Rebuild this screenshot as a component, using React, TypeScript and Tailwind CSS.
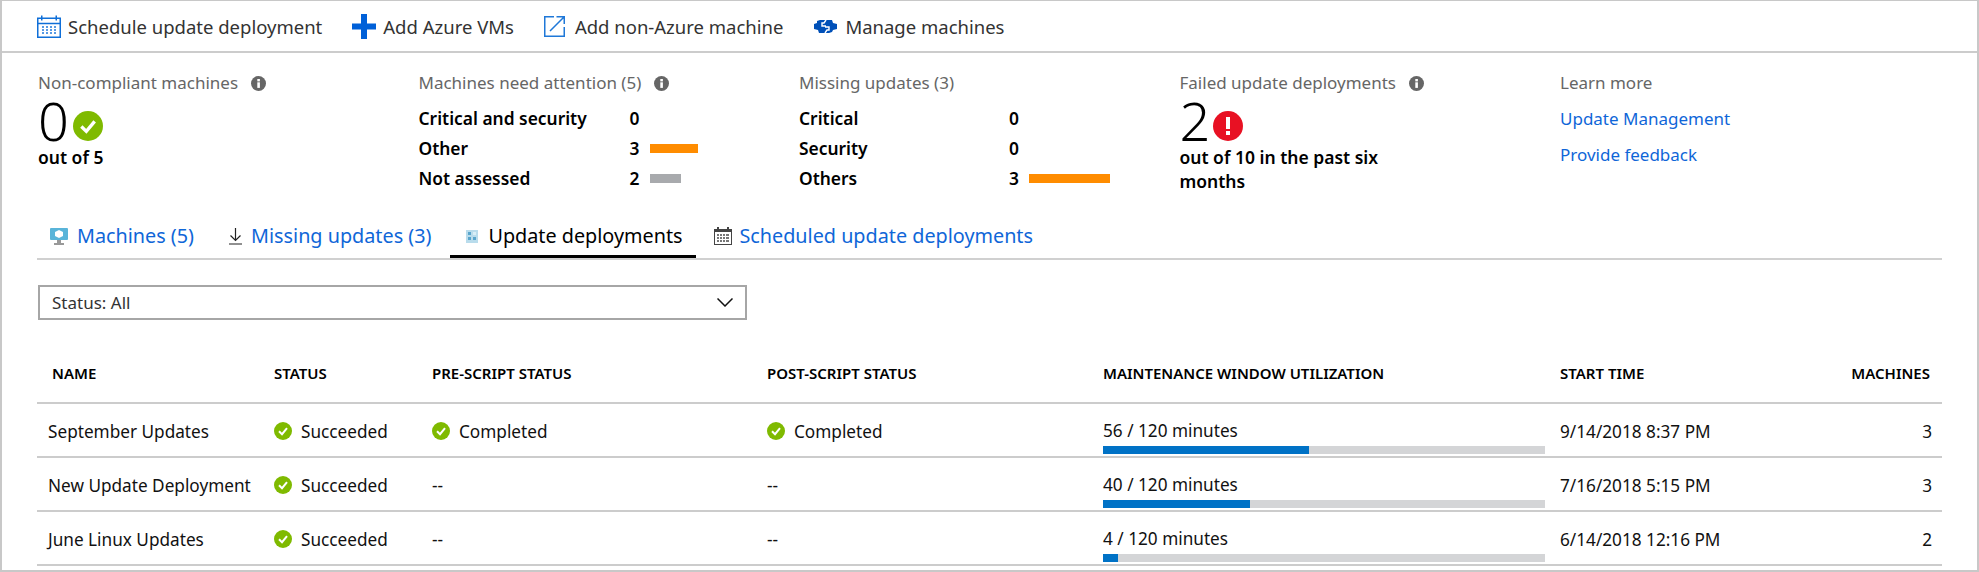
import type { ReactNode } from "react";

const font = "font-['Noto_Sans','Open_Sans',sans-serif]";

function CalendarIcon() {
  const c = "#0f6fd8";
  return (
    <svg width="24" height="23" viewBox="0 0 24 23" fill="none">
      <rect x="0.75" y="3.25" width="22.5" height="19" fill="#fff" stroke={c} strokeWidth="1.5" />
      <path d="M0 8.5h24" stroke={c} strokeWidth="1.5" />
      <rect x="4" y="0.5" width="1.5" height="5" fill={c} />
      <rect x="18.5" y="0.5" width="1.5" height="5" fill={c} />
      {[5, 9, 13, 17].map((x) =>
        [11, 14, 17].map((y) => (
          <rect key={`${x}-${y}`} x={x} y={y} width="2" height="2" fill={c} opacity="0.7" />
        )),
      )}
    </svg>
  );
}

function CheckCircle({ size }: { size: number }) {
  return (
    <svg width={size} height={size} viewBox="0 0 18 18">
      <circle cx="9" cy="9" r="9" fill="#7fba00" />
      <path d="M5 9.3 8 12.2 13 6.2" fill="none" stroke="#fff" strokeWidth="2" />
    </svg>
  );
}

function InfoDot() {
  return (
    <svg width="15" height="15" viewBox="0 0 15 15">
      <circle cx="7.5" cy="7.5" r="7.5" fill="#666" />
      <rect x="6.3" y="6.3" width="2.6" height="5.6" fill="#fff" />
      <rect x="6.3" y="3" width="2.6" height="2.4" fill="#fff" />
    </svg>
  );
}

function Summary({ title, info, children }: { title: string; info?: boolean; children: ReactNode }) {
  return (
    <div className="w-[380.5px] shrink-0">
      <div className="flex h-[24px] items-center gap-[13px] text-[17px] leading-[24px] text-[#666]">
        {title}
        {info ? <InfoDot /> : null}
      </div>
      {children}
    </div>
  );
}

function CountRows({ rows, valueWidth }: { rows: { label: string; value: number; bar?: number; color?: string }[]; valueWidth: number }) {
  return (
    <div className="mt-[8px] text-[17.4px] leading-[24px] font-semibold text-black">
      {rows.map((row) => (
        <div key={row.label} className="flex h-[30px] items-center">
          <span style={{ width: valueWidth }}>{row.label}</span>
          <span className="w-[16px]">{row.value}</span>
          {row.bar ? <span className="ml-[4px] h-[9px]" style={{ width: row.bar, backgroundColor: row.color }} /> : null}
        </div>
      ))}
    </div>
  );
}

const deployments = [
  { name: "September Updates", pre: "Completed", post: "Completed", used: 56, fill: 206, start: "9/14/2018 8:37 PM", machines: 3 },
  { name: "New Update Deployment", pre: "--", post: "--", used: 40, fill: 147, start: "7/16/2018 5:15 PM", machines: 3 },
  { name: "June Linux Updates", pre: "--", post: "--", used: 4, fill: 15, start: "6/14/2018 12:16 PM", machines: 2 },
];

const gridCols = "grid grid-cols-[237px_158px_335px_336px_457px_1fr]";

function ScriptStatus({ value }: { value: string }) {
  if (value === "--") return <span>--</span>;
  return (
    <span className="flex items-center gap-[9px]">
      <CheckCircle size={18} />
      {value}
    </span>
  );
}

export default function App() {
  return (
    <div className={`${font} h-[572px] overflow-hidden border-t border-r-2 border-b-2 border-l-2 border-[#c8c8c8] bg-white text-black`}>
      <div className="flex h-[52px] items-center border-b-2 border-[#ccc] pt-[1px] pl-[35px] text-[18.5px] text-[#333]">
        <span className="flex items-center gap-[7px]">
          <CalendarIcon />
          Schedule update deployment
        </span>
        <span className="ml-[30px] flex items-center gap-[7px]">
          <svg width="24" height="25" viewBox="0 0 24 25">
            <path d="M9 0h6v9.5h9v6h-9V25H9v-9.500H0v-6h9z" fill="#0060d8" />
          </svg>
          Add Azure VMs
        </span>
        <span className="ml-[30px] flex items-center gap-[10px]">
          <svg width="21" height="21" viewBox="0 0 21 21" fill="none" stroke="#1f78d8" strokeWidth="1.5">
            <path d="M10 .75H.75v19.5h19.5V11" />
            <path d="M6 15 19.500 1.500M12.500 .75h7.750V8" />
          </svg>
          Add non-Azure machine
        </span>
        <span className="ml-[31px] flex items-center gap-[8px]">
          <svg width="23" height="13" viewBox="0 0 23 13">
            <path d="M0 4 3 3V1l3-1h12l1 3 4 1v5l-4 1-1 2-3 1H5L4 10 0 9z" fill="#0050b8" />
            <path d="M12 0 10 3H8v3h4M11 13l2-3h2V7h-4" fill="none" stroke="#fff" strokeWidth="1.4" />
          </svg>
          Manage machines
        </span>
      </div>

      <div className="flex pt-[18px] pl-[36px]">
        <Summary title="Non-compliant machines" info>
          <div className="flex h-[50px] items-center">
            <span className="text-[54px] leading-[44px] font-light">0</span>
            <span className="mt-[11px] ml-[4px]">
              <CheckCircle size={30} />
            </span>
          </div>
          <div className="text-[17.5px] leading-[24px] font-semibold">out of 5</div>
        </Summary>
        <Summary title="Machines need attention (5)" info>
          <CountRows
            valueWidth={211}
            rows={[
              { label: "Critical and security", value: 0 },
              { label: "Other", value: 3, bar: 48, color: "#ff8c00" },
              { label: "Not assessed", value: 2, bar: 31, color: "#a8aaad" },
            ]}
          />
        </Summary>
        <Summary title="Missing updates (3)">
          <CountRows
            valueWidth={210}
            rows={[
              { label: "Critical", value: 0 },
              { label: "Security", value: 0 },
              { label: "Others", value: 3, bar: 81, color: "#ff8c00" },
            ]}
          />
        </Summary>
        <Summary title="Failed update deployments" info>
          <div className="flex h-[50px] items-center">
            <span className="text-[54px] leading-[44px] font-light">2</span>
            <span className="mt-[11px] ml-[3px]">
              <svg width="30" height="30" viewBox="0 0 30 30">
                <circle cx="15" cy="15" r="15" fill="#e81123" />
                <rect x="13" y="6" width="4" height="12" fill="#fff" />
                <rect x="13" y="20" width="4" height="4" fill="#fff" />
              </svg>
            </span>
          </div>
          <div className="w-[240px] text-[17.5px] leading-[24px] font-semibold">out of 10 in the past six months</div>
        </Summary>
        <div className="text-[17px] leading-[24px]">
          <div className="flex h-[24px] items-center text-[#666]">Learn more</div>
          <div className="mt-[12px] text-[#0f66d8]">Update Management</div>
          <div className="mt-[12px] text-[#0f66d8]">Provide feedback</div>
        </div>
      </div>

      <div className="mt-[19px] mr-[35px] ml-[35px] flex h-[48px] items-stretch border-b-2 border-[#d0d0d0] pl-[13px] text-[19.8px] text-[#0f66d8]">
        <span className="flex items-center gap-[9px] pt-[2px]">
          <svg width="18" height="17" viewBox="0 0 18 17">
            <rect x="0" y="0" width="18" height="12" rx="1" fill="#59b4d9" />
            <path d="M9 2l4 2v4l-4 2-4-2V4z" fill="#fff" />
            <rect x="7" y="12" width="4" height="3" fill="#999" />
            <rect x="4" y="15" width="10" height="2" fill="#999" />
          </svg>
          Machines (5)
        </span>
        <span className="ml-[35px] flex items-center gap-[9px] pt-[2px]">
          <svg width="13" height="17" viewBox="0 0 13 17" fill="none" stroke="#222" strokeWidth="1.2">
            <path d="M6.500 0v12M1.500 7.500l5 5 5-5M0 16h13" />
          </svg>
          Missing updates (3)
        </span>
        <span className="relative ml-[19px] flex w-[246px] items-center gap-[10px] pt-[2px] pl-[16px] text-black">
          <svg width="12" height="13" viewBox="0 0 12 13">
            <rect width="12" height="13" fill="#b9dcec" />
            <rect x="2" y="2" width="3" height="3" fill="#59a5cc" />
            <rect x="7" y="2" width="3" height="3" fill="#d9eef6" />
            <rect x="2" y="7" width="3" height="3" fill="#59a5cc" />
            <rect x="7" y="7" width="3" height="3" fill="#59a5cc" />
          </svg>
          Update deployments
          <span className="absolute right-0 bottom-0 left-0 h-[3px] bg-black" />
        </span>
        <span className="ml-[18px] flex items-center gap-[7px] pt-[2px]">
          <svg width="18" height="18" viewBox="0 0 18 18">
            <rect x="0.5" y="2.5" width="17" height="15" fill="#fff" stroke="#444" />
            <rect x="0" y="2" width="18" height="3" fill="#444" />
            <rect x="3" y="0" width="2" height="3" fill="#444" />
            <rect x="13" y="0" width="2" height="3" fill="#444" />
            <path d="M3 7h2v2H3zM6 7h2v2H6zM9 7h2v2H9zM12 7h3v2h-3zM3 10h2v2H3zM6 10h2v2H6zM9 10h2v2H9zM12 10h3v2h-3zM3 13h2v2H3zM6 13h2v2H6zM9 13h2v2H9zM12 13h3v2h-3z" fill="#777" />
          </svg>
          Scheduled update deployments
        </span>
      </div>

      <div className="mt-[25px] ml-[36px] flex h-[35px] w-[709px] items-center justify-between border-2 border-[#a6a6a6] pr-[12px] pl-[12px] text-[17px] text-[#333]">
        Status: All
        <svg width="16" height="9" viewBox="0 0 16 9" fill="none" stroke="#111" strokeWidth="1.5">
          <path d="M.5.5 8 8 15.500.5" />
        </svg>
      </div>

      <div className="mr-[35px] ml-[35px]">
        <div className={`${gridCols} mt-[31px] h-[53px] border-b-2 border-[#ccc] pb-[6px] text-[15px] font-semibold`}>
          <span className="self-center pl-[15px]">NAME</span>
          <span className="self-center">STATUS</span>
          <span className="self-center">PRE-SCRIPT STATUS</span>
          <span className="self-center">POST-SCRIPT STATUS</span>
          <span className="self-center">MAINTENANCE WINDOW UTILIZATION</span>
          <span className="flex justify-between self-center">
            START TIME
            <span className="pr-[12px]">MACHINES</span>
          </span>
        </div>
        {deployments.map((row) => (
          <div key={row.name} className={`${gridCols} h-[54px] border-b-2 border-[#ccc] text-[17.2px] text-[#111]`}>
            <span className="self-center pt-[3px] pl-[11px]">{row.name}</span>
            <span className="flex items-center self-center pt-[3px]">
              <ScriptStatus value="Succeeded" />
            </span>
            <span className="self-center pt-[3px]">
              <ScriptStatus value={row.pre} />
            </span>
            <span className="self-center pt-[3px]">
              <ScriptStatus value={row.post} />
            </span>
            <div className="flex flex-col pt-[16px]">
              <span className="h-[26px] leading-[22px]">{row.used} / 120 minutes</span>
              <div className="h-[8px] w-[442px] bg-[#d4d5d7]">
                <div className="h-full bg-[#0072c6]" style={{ width: row.fill }} />
              </div>
            </div>
            <span className="flex justify-between self-center pt-[3px]">
              {row.start}
              <span className="pr-[10px]">{row.machines}</span>
            </span>
          </div>
        ))}
      </div>
    </div>
  );
}
